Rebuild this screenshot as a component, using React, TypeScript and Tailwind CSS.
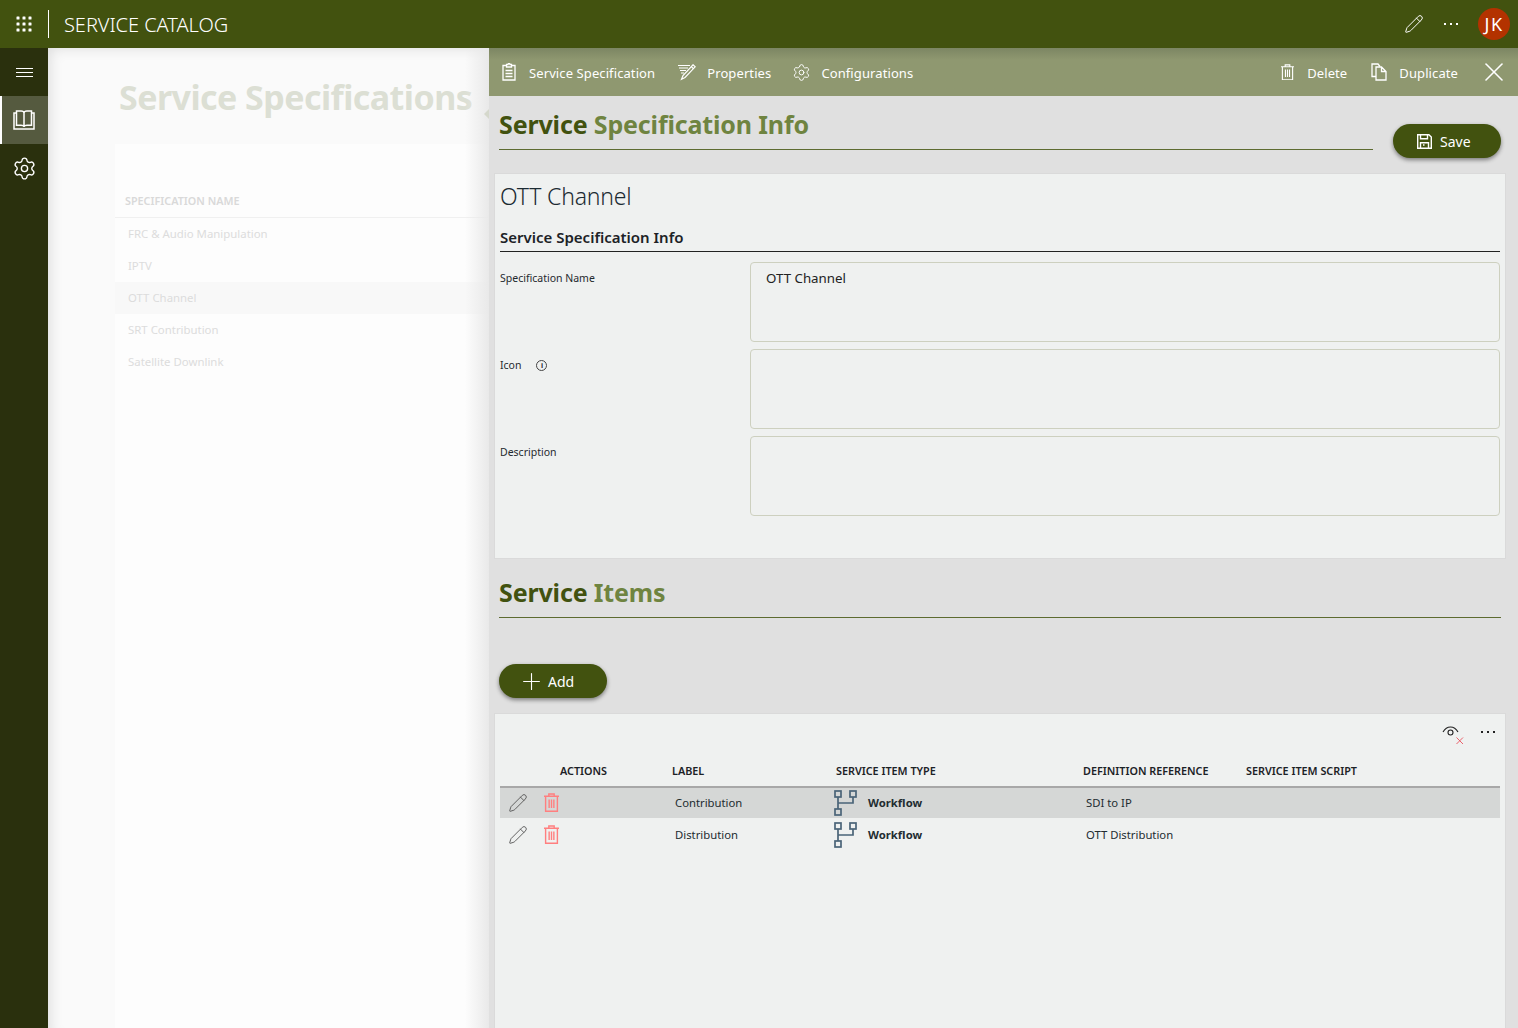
import { Pencil, Plus, Settings, X } from "lucide-react";

const specs = ["FRC & Audio Manipulation", "IPTV", "OTT Channel", "SRT Contribution", "Satellite Downlink"];

const items = [
    { label: "Contribution", reference: "SDI to IP", selected: true },
    { label: "Distribution", reference: "OTT Distribution", selected: false },
];

function Dots({ className }: { className: string }) {
    return (
        <span className={`flex gap-[4px] ${className}`}>
            <span className="size-[2px] bg-current" />
            <span className="size-[2px] bg-current" />
            <span className="size-[2px] bg-current" />
        </span>
    );
}

function WaffleIcon() {
    return (
        <svg width="16" height="16" viewBox="0 0 16 16" fill="white">
            {[1, 7, 13].map((y) => [1, 7, 13].map((x) => <rect key={`${x}-${y}`} x={x - 0.5} y={y - 0.5} width="3" height="3" rx="0.5" />))}
        </svg>
    );
}

function MenuLines() {
    return (
        <svg width="17" height="9" viewBox="0 0 17 9" fill="white">
            <rect y="0" width="17" height="1" />
            <rect y="4" width="17" height="1" />
            <rect y="8" width="17" height="1" />
        </svg>
    );
}

function BookIcon() {
    return (
        <svg width="22" height="20" viewBox="0 0 22 20" fill="none" stroke="white" strokeWidth="1.500">
            <path d="M3.500 3H1v16h20V3h-2.500" />
            <path d="M3.500 1h4.500c1.800 0 3 .7 3 2V17c0-1-1.500-1.800-3-1.800H3.500zM18.500 1H14c-1.800 0-3 .7-3 2V17c0-1 1.500-1.800 3-1.800h4.500z" />
        </svg>
    );
}

function ClipboardIcon() {
    return (
        <svg width="14" height="18" viewBox="0 0 14 18" fill="none" stroke="white" strokeWidth="1.300">
            <path d="M4.500 2.500H1v14.500h12V2.500H9.500" />
            <path d="M4.500 4V1.500h1.500a1 1 0 0 1 2 0h1.500V4zM3.500 7.500h7M3.500 10.500h7M3.500 13.500h7" />
        </svg>
    );
}

function NoteEditIcon() {
    return (
        <svg width="18" height="17" viewBox="0 0 18 17" fill="none" stroke="white" strokeWidth="1.200">
            <path d="M0 1.500h12M1 4h9M2 6.500h6M3 9h3" />
            <path d="M15 .8l2.200 2L7 13.500l-3.500 1.700L5 11.500zM13.300 2.600l2.200 2.100" />
        </svg>
    );
}

function TrashIcon({ color, size, weight }: { color: string; size: number; weight: number }) {
    return (
        <svg width={size} height={(size * 18) / 14} viewBox="0 0 14 18" fill="none" stroke={color} strokeWidth={weight}>
            <path d="M0 3h14M1.500 3v14h11V3M4.500 3V1h5v2M4.800 6v8M7 6v8M9.200 6v8" />
        </svg>
    );
}

function CopyIcon() {
    return (
        <svg width="16" height="18" viewBox="0 0 16 18" fill="none" stroke="white" strokeWidth="1.300">
            <path d="M5 13.500H1V1h6l2 2.500" />
            <path d="M5 4h5.500L15 8.500V17H5zM10.500 4v4.500H15" />
        </svg>
    );
}

function SaveIcon() {
    return (
        <svg width="15" height="15" viewBox="0 0 15 15" fill="none" stroke="white" strokeWidth="1.400">
            <path d="M.7.700h11.200l2.400 2.400v11.200H.7z" />
            <path d="M3.500 1v3.800h7V1M3.500 14V8.800h8V14M6 11h1.500" />
        </svg>
    );
}

function WorkflowIcon() {
    return (
        <svg width="24" height="26" viewBox="0 0 24 26" fill="none" stroke="#4a6478" strokeWidth="1.700">
            <rect x="1" y="1" width="6" height="6" />
            <rect x="16" y="1" width="6" height="6" />
            <rect x="1" y="19" width="6" height="6" />
            <path d="M4 7v12M4 13h15V7" />
        </svg>
    );
}

function HideColumnsIcon() {
    return (
        <svg width="22" height="22" viewBox="0 0 22 22" fill="none">
            <path d="M1 7C3 3.500 5.500 2 8.500 2S14 3.500 16 7" stroke="#222" strokeWidth="1.100" />
            <circle cx="8.500" cy="7.500" r="2.500" stroke="#222" strokeWidth="1.100" />
            <path d="M14.500 12.500l6.500 6.500M21 12.500L14.500 19" stroke="#e8505b" strokeWidth="0.900" />
        </svg>
    );
}

function PageTitle({ dark, light }: { dark: string; light: string }) {
    return (
        <h2 className="text-[25px] leading-[32px] font-bold tracking-[-0.15px] text-[#42520f]">
            {dark} <span className="text-[#6f8440]">{light}</span>
        </h2>
    );
}

function CommandButton({ icon, label, className }: { icon: React.ReactNode; label: string; className: string }) {
    return (
        <div className={`flex items-center ${className}`}>
            <span className="flex w-[20px] justify-center">{icon}</span>
            <span className="mt-[3px]">{label}</span>
        </div>
    );
}

function PillButton({ icon, label, className }: { icon: React.ReactNode; label: string; className: string }) {
    return (
        <button className={`flex h-[34px] w-[108px] items-center rounded-full bg-[#42520f] text-[14px] text-white shadow-[0_2px_4px_rgba(0,0,0,0.45)] ${className}`}>
            {icon}
            <span>{label}</span>
        </button>
    );
}

function FormRow({ label, info, value }: { label: string; info?: boolean; value?: string }) {
    return (
        <div className="flex">
            <div className="flex w-[250px] items-start pt-[9px] text-[10.500px] leading-[15px] text-[#1f2a2e]">
                <span>{label}</span>
                {info && (
                    <span className="mt-[2px] ml-[15px] flex size-[11px] items-center justify-center rounded-full border border-[#444] text-[7px] leading-none font-bold">i</span>
                )}
            </div>
            <div className="h-[80px] flex-1 rounded-[4px] border border-[#cdd0bf] px-[15px] py-[7px] text-[13.300px] leading-[17px] text-[#222]">
                {value}
            </div>
        </div>
    );
}

export default function App() {
    return (
        <div className="flex h-screen flex-col overflow-hidden font-['Noto_Sans',sans-serif]">
            <header className="flex h-[48px] shrink-0 items-center bg-[#42520f] text-white">
                <div className="flex w-[48px] justify-center"><WaffleIcon /></div>
                <div className="h-[28px] w-px bg-white" />
                <h1 className="mt-[2px] ml-[15px] flex-1 text-[20px] font-light tracking-[-0.05px]">SERVICE CATALOG</h1>
                <Pencil size={20} strokeWidth={1.200} className="mr-[20px]" />
                <Dots className="mr-[20px]" />
                <div className="mr-[8px] flex size-[32px] items-center justify-center rounded-full bg-[#b33200] text-[18px] tracking-[1.500px]">JK</div>
            </header>

            <div className="flex min-h-0 flex-1">
                <nav className="w-[48px] shrink-0 bg-[#2a300d] text-white">
                    <div className="flex h-[48px] items-center justify-center pt-px"><MenuLines /></div>
                    <div className="flex h-[48px] items-center justify-center border-l-2 border-white bg-[#555a3f] pr-[3px]"><BookIcon /></div>
                    <div className="flex h-[48px] items-center justify-center"><Settings size={25} strokeWidth={1.300} /></div>
                </nav>

                <main className="relative w-[441px] shrink-0 overflow-hidden bg-[#fafafa] pt-[32px] shadow-[inset_8px_6px_14px_-6px_rgba(0,0,0,0.12)]">
                    <h1 className="ml-[71px] text-[34px] leading-[34px] font-bold tracking-[-0.55px] whitespace-nowrap text-[#dcdfd4]">Service Specifications</h1>
                    <div className="mt-[30px] ml-[67px] h-[900px] bg-[#fdfdfd] pt-[47px]">
                        <div className="ml-[10px] h-[26px] text-[10.800px] leading-[20px] font-semibold text-[#d9d9d9]">SPECIFICATION NAME</div>
                        <div className="border-t border-[#f0f0f0]">
                            {specs.map((s) => (
                                <div key={s} className={`flex h-[32px] items-center pl-[13px] text-[11.400px] text-[#dcdcdc] ${s === "OTT Channel" ? "bg-[#f8f8f8]" : ""}`}>{s}</div>
                            ))}
                        </div>
                    </div>
                    <div className="absolute top-0 right-0 bottom-0 w-[24px] bg-gradient-to-r from-transparent to-[#e9e9e9]" />
                    <div className="absolute top-[61px] right-0 size-0 border-y-[5px] border-r-[5px] border-y-transparent border-r-[#d5d8cc]" />
                </main>

                <section className="min-w-0 flex-1 bg-[#e0e0e0]">
                    <div className="flex h-[48px] items-center bg-gradient-to-b from-[#7c8663] from-0% to-[#8f9870] to-25% text-[13px] tracking-[0.1px] text-white">
                        <CommandButton icon={<ClipboardIcon />} label="Service Specification" className="ml-[10px] gap-[10px]" />
                        <CommandButton icon={<NoteEditIcon />} label="Properties" className="ml-[22px] gap-[10px]" />
                        <CommandButton icon={<Settings size={19} strokeWidth={1.200} />} label="Configurations" className="ml-[20px] gap-[10px]" />
                        <div className="flex-1" />
                        <CommandButton icon={<TrashIcon color="white" size={13} weight={1.200} />} label="Delete" className="gap-[10px]" />
                        <CommandButton icon={<CopyIcon />} label="Duplicate" className="ml-[22px] gap-[10px]" />
                        <X size={32} strokeWidth={1.200} className="mr-[8px] ml-[20px]" />
                    </div>

                    <div className="flex items-start pl-[10px] pr-[17px] pt-[12px]">
                        <div className="h-[42px] flex-1 border-b border-[#5d6b30]">
                            <PageTitle dark="Service" light="Specification Info" />
                        </div>
                        <PillButton icon={<span className="mr-[8px] ml-[24px]"><SaveIcon /></span>} label="Save" className="mt-[16px] ml-[20px]" />
                    </div>

                    <div className="mt-[15px] mr-[12px] ml-[5px] h-[386px] border border-[#dadada] bg-[#eff1f0] px-[5px]">
                        <div className="pt-[7px] text-[23px] leading-[31px] font-light tracking-[-0.2px] text-[#1c2b33]">OTT Channel</div>
                        <div className="mt-[12px] h-[28px] border-b border-[#222] text-[15px] leading-[26px] font-semibold text-[#1c2226]">Service Specification Info</div>
                        <div className="mt-[10px] flex flex-col gap-[7px]">
                            <FormRow label="Specification Name" value="OTT Channel" />
                            <FormRow label="Icon" info />
                            <FormRow label="Description" />
                        </div>
                    </div>

                    <div className="mt-[17px] mr-[17px] ml-[10px] h-[42px] border-b border-[#5d6b30]">
                        <PageTitle dark="Service" light="Items" />
                    </div>

                    <PillButton icon={<Plus size={27} strokeWidth={1} className="mr-[3px] ml-[19px]" />} label="Add" className="mt-[46px] ml-[10px]" />

                    <div className="mt-[15px] mr-[12px] ml-[5px] h-[400px] border border-[#dadada] bg-[#eff1f0] px-[5px]">
                        <div className="flex h-[36px] items-center justify-end pr-[5px]">
                            <span className="mt-[8px] mr-[17px]"><HideColumnsIcon /></span>
                            <Dots className="text-[#222]" />
                        </div>
                        <div className="grid h-[38px] grid-cols-[172px_164px_247px_163px_1fr] items-center border-b-2 border-[#a8a8a8] pt-[7px] text-[10.800px] font-semibold text-[#1c2226]">
                            <div className="pl-[60px]">ACTIONS</div>
                            <div>LABEL</div>
                            <div>SERVICE ITEM TYPE</div>
                            <div>DEFINITION REFERENCE</div>
                            <div>SERVICE ITEM SCRIPT</div>
                        </div>
                        {items.map((item) => (
                            <div key={item.label} className={`mb-[2px] grid h-[30px] grid-cols-[172px_164px_247px_163px_1fr] items-center text-[11.300px] text-[#222c30] ${item.selected ? "bg-[#d5d7d6]" : ""}`}>
                                <div className="flex items-center pl-[8px]">
                                    <Pencil size={20} strokeWidth={1.100} className="text-[#555]" />
                                    <span className="ml-[16px]"><TrashIcon color="#ff7f7f" size={15} weight={1.300} /></span>
                                </div>
                                <div className="pl-[3px]">{item.label}</div>
                                <div className="flex items-center">
                                    <span className="mt-[-1px] ml-[-2px]"><WorkflowIcon /></span>
                                    <span className="ml-[10px] font-bold">Workflow</span>
                                </div>
                                <div className="pl-[3px] whitespace-nowrap">{item.reference}</div>
                                <div />
                            </div>
                        ))}
                    </div>
                </section>
            </div>
        </div>
    );
}
